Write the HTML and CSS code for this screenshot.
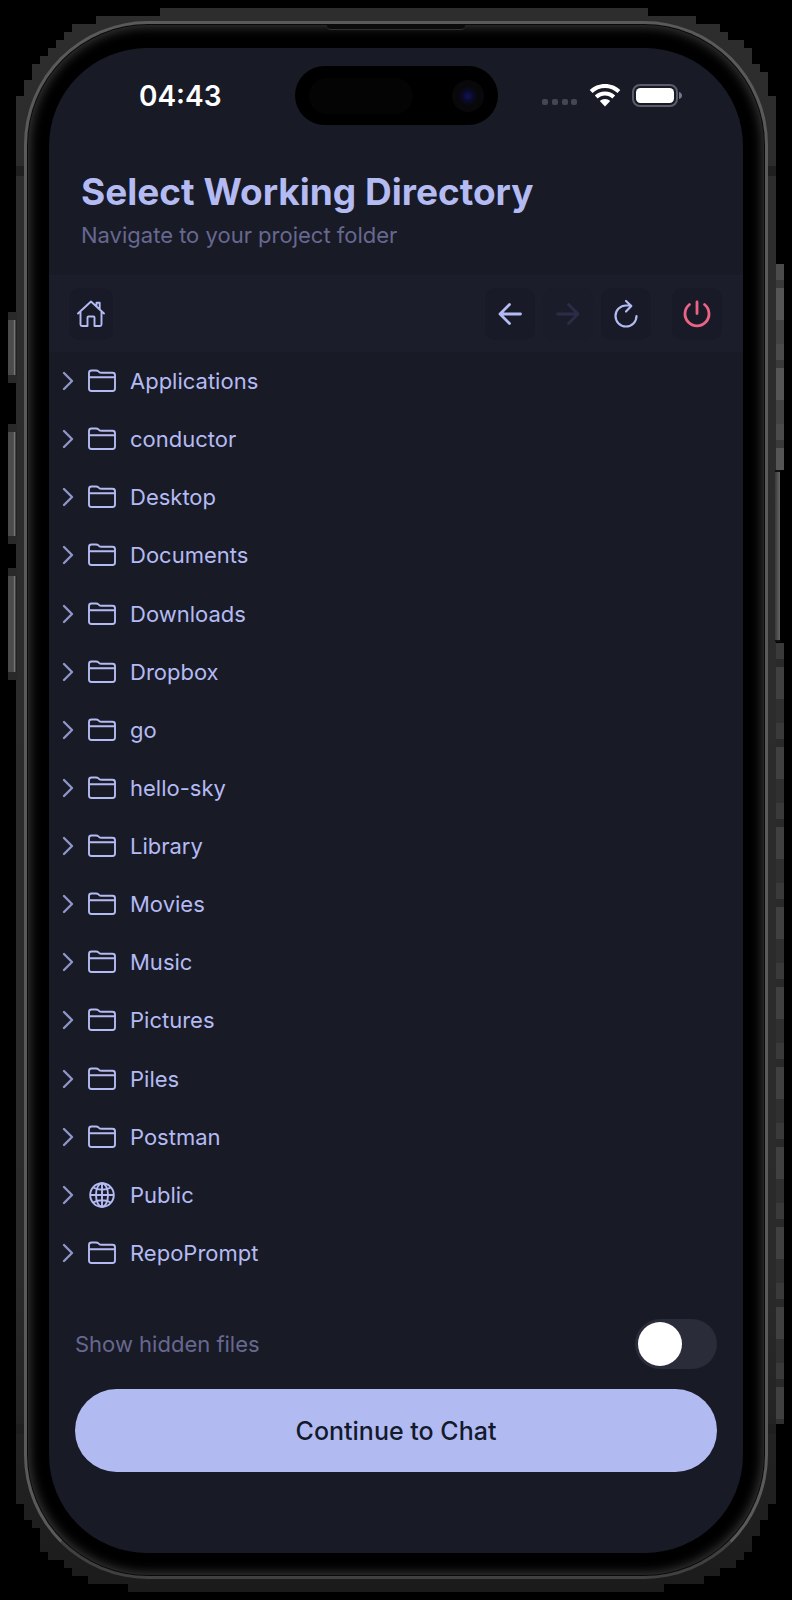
FILE: index.html
```html
<!DOCTYPE html>
<html lang="en">
<head>
<meta charset="utf-8">
<meta name="viewport" content="width=device-width, initial-scale=1">
<title>Select Working Directory</title>
<link rel="stylesheet" href="styles.css">
</head>
<body>
<svg class="sprite" aria-hidden="true">
  <symbol id="chevron" viewBox="0 0 12 20"><path d="M2 2l8 8-8 8" fill="none" stroke="currentColor" stroke-width="2.400" stroke-linecap="round" stroke-linejoin="round"/></symbol>
  <symbol id="folder" viewBox="0 0 30 26"><path d="M2 20.500V5Q2 2.500 4.500 2.500H9Q10.500 2.500 11.500 3.400L12 3.900Q13 4.700 14.500 4.700H25.500Q28 4.700 28 7.200V20.500Q28 23 25.500 23H4.500Q2 23 2 20.500ZM2 9.300H28" fill="none" stroke="currentColor" stroke-width="1.900" stroke-linejoin="round"/></symbol>
  <symbol id="globe" viewBox="0 0 30 26"><g fill="none" stroke="currentColor" stroke-width="1.900"><circle cx="15" cy="13" r="11.800"/><ellipse cx="15" cy="13" rx="6" ry="11.800"/><path d="M15 1V25M3 13H27M6 5.500Q15 10 24 5.500M6 20.500Q15 16 24 20.500"/></g></symbol>
</svg>
<div class="device">
  <div class="chassis"></div>
  <span class="key key-action"></span>
  <span class="key key-up"></span>
  <span class="key key-down"></span>
  <span class="glint glint-top"></span>
  <span class="glint glint-bottom"></span>
  <span class="key key-power"></span>
  <div class="rim">
    <span class="speaker"></span>
    <main class="screen">
      <div class="status">
        <time class="clock">04:43</time>
        <div class="island"><span class="sensor"></span><span class="lens"></span></div>
        <div class="signals">
          <svg width="36" height="24" viewBox="0 0 36 24" fill="#454653"><rect x="0" y="15" width="6" height="6" rx="2"/><rect x="10" y="15" width="6" height="6" rx="2"/><rect x="20" y="15" width="6" height="6" rx="2"/><rect x="29" y="15" width="6" height="6" rx="2"/></svg>
          <svg width="32" height="24" viewBox="0 0 32 24" fill="#fff"><path d="M16 0C22 0 27.500 2.200 31.300 6L28.500 9C25.200 5.700 20.800 3.900 16 3.900S6.800 5.700 3.500 9L.7 6C4.500 2.200 10 0 16 0Z"/><path d="M16 7.500C20 7.500 23.500 9 26.200 11.500L23.300 14.500C21.300 12.600 18.800 11.500 16 11.500S10.700 12.600 8.700 14.500L5.800 11.500C8.500 9 12 7.500 16 7.500Z"/><path d="M16 15C18 15 19.900 15.800 21.200 17L16 22.500 10.800 17C12.100 15.800 14 15 16 15Z"/></svg>
          <svg width="51" height="24" viewBox="0 0 51 24"><rect x="1" y="1" width="44" height="21" rx="7" fill="none" stroke="#5b5c69" stroke-width="2"/><rect x="4" y="4" width="38" height="15" rx="4.500" fill="#fff"/><path d="M47 8Q50 9 50 11.500T47 15Z" fill="#777883"/></svg>
        </div>
      </div>
      <header class="heading">
        <h1>Select Working Directory</h1>
        <p>Navigate to your project folder</p>
      </header>
      <nav class="toolbar" aria-label="Directory navigation">
        <button class="tool home" type="button" aria-label="Home"><svg width="30" height="30" viewBox="0 0 30 30" fill="none" stroke="currentColor" stroke-width="1.900" stroke-linecap="round" stroke-linejoin="round"><path d="M2 14.500L15 2.500 28 14.500M4.500 13V25.500Q4.500 27 6 27H11.500V18.500Q11.500 17.500 12.500 17.500H17.500Q18.500 17.500 18.500 18.500V27H24Q25.500 27 25.500 25.500V13M20.500 7V3.700H23.700V10"/></svg></button>
        <button class="tool" type="button" aria-label="Back"><svg width="30" height="30" viewBox="0 0 30 30" fill="none" stroke="currentColor" stroke-width="2.800" stroke-linecap="round" stroke-linejoin="round"><path d="M25.500 15H5M14.500 5.500L5 15l9.500 9.500"/></svg></button>
        <button class="tool forward" type="button" aria-label="Forward" disabled><svg width="30" height="30" viewBox="0 0 30 30" fill="none" stroke="currentColor" stroke-width="2.800" stroke-linecap="round" stroke-linejoin="round"><path d="M4.500 15H25M15.500 5.500L25 15l-9.500 9.500"/></svg></button>
        <button class="tool" type="button" aria-label="Refresh"><svg width="30" height="30" viewBox="0 0 30 30" fill="none" stroke="currentColor" stroke-width="2.200" stroke-linecap="round" stroke-linejoin="round"><path d="M25.500 17A10.500 10.500 0 1 1 15 6.500H20M15 2L20.300 7 15 12.500"/></svg></button>
        <button class="tool power" type="button" aria-label="Disconnect"><svg width="30" height="30" viewBox="0 0 30 30" fill="none" stroke="currentColor" stroke-width="2.800" stroke-linecap="round"><path d="M15 3V14.500M7.500 5.500A12 12 0 1 0 22.500 5.500"/></svg></button>
      </nav>
      <ul class="list">
        <li><button class="row" type="button"><svg class="chev"><use href="#chevron"/></svg><svg class="kind"><use href="#folder"/></svg>Applications</button></li>
        <li><button class="row" type="button"><svg class="chev"><use href="#chevron"/></svg><svg class="kind"><use href="#folder"/></svg>conductor</button></li>
        <li><button class="row" type="button"><svg class="chev"><use href="#chevron"/></svg><svg class="kind"><use href="#folder"/></svg>Desktop</button></li>
        <li><button class="row" type="button"><svg class="chev"><use href="#chevron"/></svg><svg class="kind"><use href="#folder"/></svg>Documents</button></li>
        <li><button class="row" type="button"><svg class="chev"><use href="#chevron"/></svg><svg class="kind"><use href="#folder"/></svg>Downloads</button></li>
        <li><button class="row" type="button"><svg class="chev"><use href="#chevron"/></svg><svg class="kind"><use href="#folder"/></svg>Dropbox</button></li>
        <li><button class="row" type="button"><svg class="chev"><use href="#chevron"/></svg><svg class="kind"><use href="#folder"/></svg>go</button></li>
        <li><button class="row" type="button"><svg class="chev"><use href="#chevron"/></svg><svg class="kind"><use href="#folder"/></svg>hello-sky</button></li>
        <li><button class="row" type="button"><svg class="chev"><use href="#chevron"/></svg><svg class="kind"><use href="#folder"/></svg>Library</button></li>
        <li><button class="row" type="button"><svg class="chev"><use href="#chevron"/></svg><svg class="kind"><use href="#folder"/></svg>Movies</button></li>
        <li><button class="row" type="button"><svg class="chev"><use href="#chevron"/></svg><svg class="kind"><use href="#folder"/></svg>Music</button></li>
        <li><button class="row" type="button"><svg class="chev"><use href="#chevron"/></svg><svg class="kind"><use href="#folder"/></svg>Pictures</button></li>
        <li><button class="row" type="button"><svg class="chev"><use href="#chevron"/></svg><svg class="kind"><use href="#folder"/></svg>Piles</button></li>
        <li><button class="row" type="button"><svg class="chev"><use href="#chevron"/></svg><svg class="kind"><use href="#folder"/></svg>Postman</button></li>
        <li><button class="row" type="button"><svg class="chev"><use href="#chevron"/></svg><svg class="kind"><use href="#globe"/></svg>Public</button></li>
        <li><button class="row" type="button"><svg class="chev"><use href="#chevron"/></svg><svg class="kind"><use href="#folder"/></svg>RepoPrompt</button></li>
      </ul>
      <footer class="actions">
        <div class="hidden-files">
          <label for="hidden">Show hidden files</label>
          <input id="hidden" class="switch" type="checkbox" role="switch">
        </div>
        <button class="continue" type="button">Continue to Chat</button>
      </footer>
    </main>
  </div>
</div>
</body>
</html>
```
FILE: styles.css
```css
* {
  box-sizing: border-box;
}

body {
  margin: 0;
  background: #000;
  color: #b4bbf3;
  font-family: Inter, "Liberation Sans", sans-serif;
  font-size: 22px;
}

button {
  border: 0;
  padding: 0;
  color: inherit;
  font: inherit;
}

.sprite {
  position: absolute;
  width: 0;
  height: 0;
}

/* Phone body */
.device {
  position: relative;
  display: flex;
  min-height: 100vh;
  padding: 21px 24px 21px 24px;
}

.chassis {
  position: absolute;
  inset: 8px 16px;
  background:
    linear-gradient(#1f1f1f, #1f1f1f) 0 158px / 100% 10px no-repeat,
    linear-gradient(#1f1f1f, #1f1f1f) 0 calc(100% - 158px) / 100% 10px no-repeat,
    linear-gradient(#2d2d2d, #2a2a2a 80%, #1b1b1b);
  clip-path: polygon(
    144px 0, 144px 8px, 80px 8px, 80px 16px, 56px 16px, 56px 24px, 48px 24px, 48px 32px,
    40px 32px, 40px 40px, 32px 40px, 32px 48px, 24px 48px, 24px 56px, 16px 56px, 16px 72px,
    8px 72px, 8px 88px, 0 88px,
    0 calc(100% - 88px), 8px calc(100% - 88px), 8px calc(100% - 72px), 16px calc(100% - 72px),
    16px calc(100% - 64px), 24px calc(100% - 64px), 24px calc(100% - 40px), 32px calc(100% - 40px),
    32px calc(100% - 32px), 48px calc(100% - 32px), 48px calc(100% - 24px), 56px calc(100% - 24px),
    56px calc(100% - 16px), 72px calc(100% - 16px), 72px calc(100% - 8px), 112px calc(100% - 8px), 112px 100%,
    calc(100% - 112px) 100%, calc(100% - 112px) calc(100% - 8px), calc(100% - 72px) calc(100% - 8px),
    calc(100% - 72px) calc(100% - 16px), calc(100% - 56px) calc(100% - 16px), calc(100% - 56px) calc(100% - 24px),
    calc(100% - 40px) calc(100% - 24px), calc(100% - 40px) calc(100% - 32px), calc(100% - 32px) calc(100% - 32px),
    calc(100% - 32px) calc(100% - 40px), calc(100% - 24px) calc(100% - 40px), calc(100% - 24px) calc(100% - 56px),
    calc(100% - 16px) calc(100% - 56px), calc(100% - 16px) calc(100% - 72px), calc(100% - 8px) calc(100% - 72px),
    calc(100% - 8px) calc(100% - 88px), 100% calc(100% - 88px),
    100% 88px, calc(100% - 8px) 88px, calc(100% - 8px) 64px, calc(100% - 16px) 64px, calc(100% - 16px) 56px,
    calc(100% - 24px) 56px, calc(100% - 24px) 40px, calc(100% - 32px) 40px, calc(100% - 32px) 32px,
    calc(100% - 48px) 32px, calc(100% - 48px) 24px, calc(100% - 56px) 24px, calc(100% - 56px) 16px,
    calc(100% - 80px) 16px, calc(100% - 80px) 8px, calc(100% - 128px) 8px, calc(100% - 128px) 0
  );
}

.key {
  position: absolute;
  left: 8px;
  width: 9px;
  border-top: 8px solid #292929;
  border-bottom: 8px solid #292929;
  background: linear-gradient(90deg, #4b4b4b 60%, #808080 70%, #222 90%);
}

.key-action {
  top: 312px;
  height: 71px;
}

.key-up {
  top: 424px;
  height: 120px;
}

.key-down {
  top: 568px;
  height: 112px;
}

.key-power {
  top: 470px;
  right: 11px;
  left: auto;
  width: 6px;
  height: 172px;
  border-width: 2px;
  border-color: #111;
  border-right: 1px solid #000;
  border-left: 0;
  background: linear-gradient(90deg, #3a3a3a, #666);
}

.glint {
  position: absolute;
  right: 8px;
  width: 8px;
  background: repeating-linear-gradient(#4b4b4b 0 16px, #3a3a3a 16px 24px, #555 24px 56px, #434343 56px 80px);
}

.glint-top {
  top: 264px;
  height: 206px;
}

.glint-bottom {
  top: 643px;
  bottom: 176px;
  background: repeating-linear-gradient(#3a3a3a 0 16px, #2a2a2a 16px 24px, #404040 24px 56px, #303030 56px 80px);
}

.rim {
  position: relative;
  display: flex;
  flex: 1;
  padding: 24px 22px 23px 22px;
  border: 3px solid #5a5a5a;
  border-bottom-color: #404040;
  border-radius: 124px;
  background: #000;
  box-shadow: inset 0 0 0 1px #0a0a0a, inset 0 0 11px 3px #3a3a3a;
}

.speaker {
  position: absolute;
  top: 1px;
  left: 50%;
  width: 138px;
  height: 5px;
  margin-left: -69px;
  border-bottom: 1px solid #303030;
  border-radius: 0 0 4px 4px;
  background: #0c0c0c;
}

.screen {
  display: flex;
  flex: 1;
  flex-direction: column;
  overflow: hidden;
  border-radius: 98px;
  background: #181a26;
}

/* Status bar */
.status {
  display: grid;
  grid-template-columns: 1fr 203px 1fr;
  align-items: center;
  padding-top: 18px;
}

.clock {
  padding-left: 90px;
  color: #fff;
  font-size: 28px;
  font-weight: 600;
  line-height: 36px;
}

.island {
  display: flex;
  align-items: center;
  justify-content: space-between;
  height: 59px;
  padding: 0 14px;
  border-radius: 30px;
  background: #000;
}

.sensor {
  width: 104px;
  height: 36px;
  border-radius: 18px;
  background: #040404;
}

.lens {
  width: 32px;
  height: 32px;
  border-radius: 50%;
  background: radial-gradient(circle, #10104a 0 2px, #0a0a2a 5px, #09091a 8px, #08080a 9px);
}

.signals {
  display: flex;
  align-items: center;
  gap: 11px;
  padding-left: 44px;
}

.signals svg {
  flex: none;
}

/* Title */
.heading {
  padding: 43px 32px 25px;
}

h1 {
  margin: 0;
  font-size: 37px;
  font-weight: 700;
  line-height: 48px;
}

.heading p {
  margin: 0;
  padding-top: 4px;
  color: #676890;
  font-size: 22px;
  line-height: 30px;
}

/* Toolbar */
.toolbar {
  display: flex;
  gap: 8px;
  padding: 13px 21px 12px 20px;
  background: #1b1d2a;
}

.tool {
  display: flex;
  align-items: center;
  justify-content: center;
  width: 50px;
  height: 52px;
  border-radius: 10px;
  background: #191a27;
}

.home {
  width: 44px;
  margin-right: auto;
}

.forward {
  background: #1b1c29;
  color: #2b2c47;
}

.power {
  margin-left: 13px;
  color: #ea6485;
}

/* Directory list */
.list {
  display: flex;
  flex: 1;
  flex-direction: column;
  margin: 0;
  padding: 0;
  list-style: none;
}

.list li {
  display: flex;
  flex: 1;
}

.row {
  display: flex;
  flex: 1;
  align-items: center;
  padding: 0 13px;
  background: none;
  text-align: left;
}

.chev {
  width: 12px;
  height: 20px;
  margin-right: 13px;
  color: #8f95c8;
}

.kind {
  width: 30px;
  height: 26px;
  margin-right: 13px;
}

/* Footer */
.actions {
  padding: 37px 26px 81px;
}

.hidden-files {
  display: flex;
  align-items: center;
  justify-content: space-between;
  margin-bottom: 20px;
  color: #676890;
}

.switch {
  width: 82px;
  height: 50px;
  margin: 0;
  padding: 3px;
  border-radius: 25px;
  background: #2b2c3a;
  appearance: none;
}

.switch::before {
  display: block;
  width: 44px;
  height: 44px;
  border-radius: 50%;
  background: #fff;
  content: "";
}

.switch:checked::before {
  margin-left: auto;
}

.continue {
  width: 100%;
  height: 83px;
  border-radius: 42px;
  background: #b2baf2;
  color: #131a2c;
  font-size: 25px;
  font-weight: 500;
}
```
